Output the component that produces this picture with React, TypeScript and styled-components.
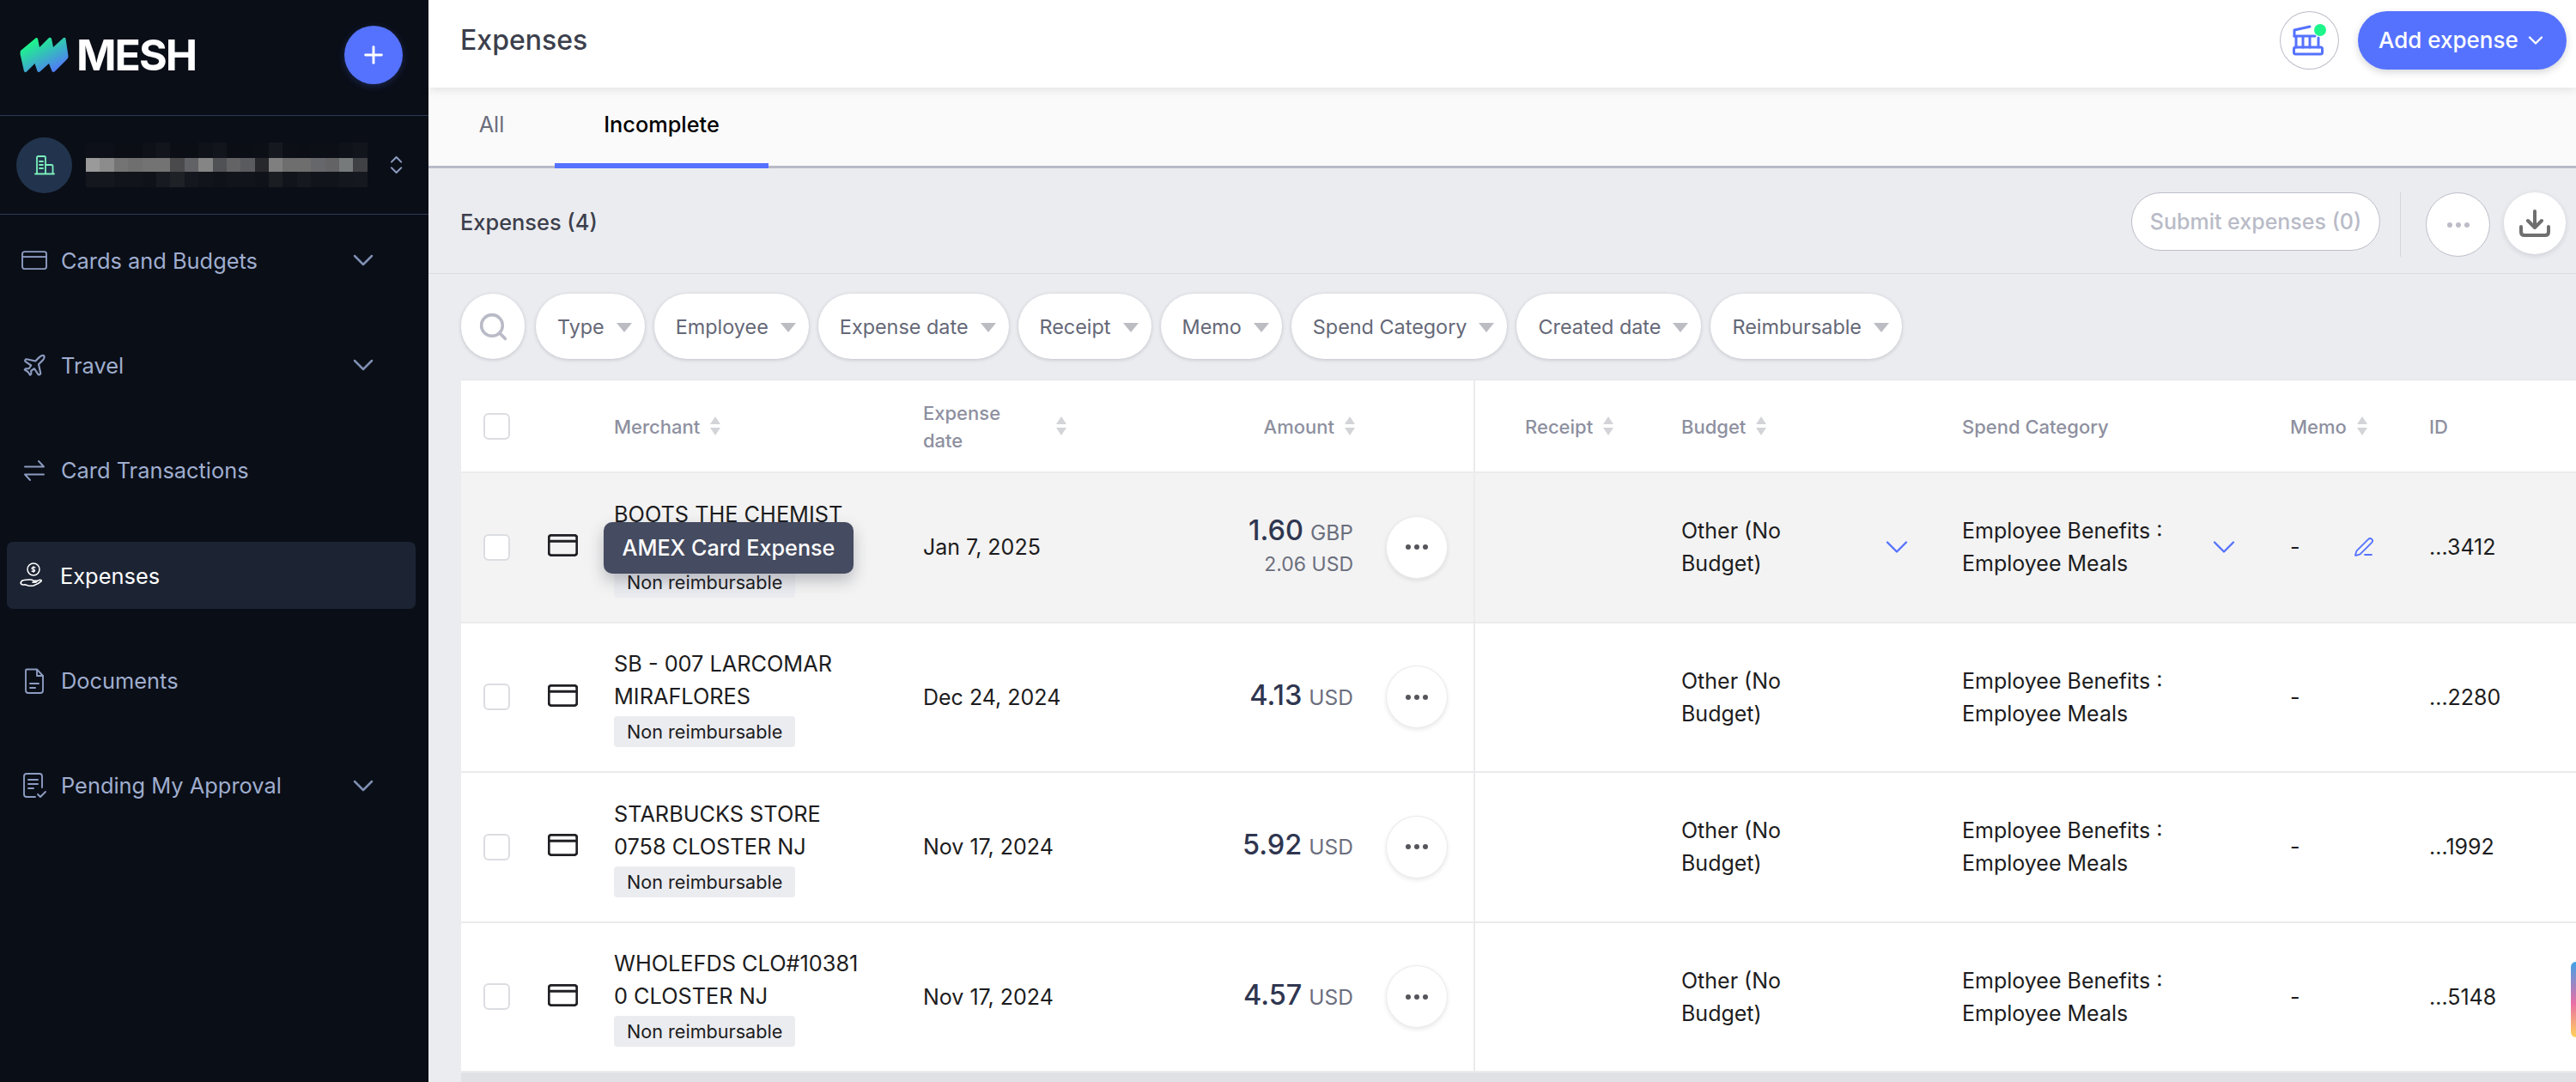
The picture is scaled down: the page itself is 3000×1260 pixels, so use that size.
import React from 'react';
import styled, { createGlobalStyle } from 'styled-components';
import { ChevronDown, ChevronsUpDown, PenLine, Plane, Plus, Search } from 'lucide-react';

const GlobalStyle = createGlobalStyle`
  html, body {
    margin: 0;
    padding: 0;
  }
  body {
    font-family: Inter, "Liberation Sans", sans-serif;
    background: #ebecf0;
  }
  * {
    box-sizing: border-box;
  }
`;

const Page = styled.div`
  display: flex;
  width: 3000px;
  height: 1260px;
  overflow: hidden;
  position: relative;
`;

/* sidebar */

const Sidebar = styled.aside`
  width: 499px;
  flex-shrink: 0;
  background: #0a0e17;
  display: flex;
  flex-direction: column;
`;

const BrandRow = styled.div`
  height: 135px;
  padding: 0 30px 7px 23px;
  display: flex;
  align-items: center;
  justify-content: space-between;
  border-bottom: 1px solid #2f3a58;
`;

const Brand = styled.div`
  display: flex;
  align-items: center;
  gap: 9px;
`;

const BrandName = styled.span`
  color: #fff;
  font-size: 50px;
  font-weight: 700;
  letter-spacing: -2px;
  line-height: 1;
`;

const RoundAdd = styled.button`
  width: 68px;
  height: 68px;
  border: 0;
  border-radius: 50%;
  background: #5572ff;
  color: #fff;
  display: flex;
  align-items: center;
  justify-content: center;
  padding: 0;
  box-shadow: 0 2px 8px rgba(85, 114, 255, 0.25);
`;

const AccountRow = styled.div`
  height: 115px;
  padding: 0 24px 0 19px;
  display: flex;
  align-items: center;
  border-bottom: 1px solid #2f3a58;
  color: #8c9cc0;
`;

const AccountBadge = styled.div`
  width: 65px;
  height: 65px;
  border-radius: 50%;
  background: #22344d;
  display: flex;
  align-items: center;
  justify-content: center;
  margin-right: 16px;
  flex-shrink: 0;
`;

const Pixelated = styled.div`
  display: grid;
  grid-template-columns: repeat(20, 16.4px);
  grid-template-rows: 18px 16px 18px;
  margin-right: 20px;
`;

const PixelBlock = styled.i<{ $tone: string }>`
  background: ${(p) => p.$tone};
`;

const NavList = styled.nav`
  display: flex;
  flex-direction: column;
  padding: 0 15px 0 8px;
  margin-top: 14px;
`;

const NavItem = styled.a<{ $active?: boolean }>`
  height: 78px;
  margin-bottom: 44.4px;
  padding: 0 41px 0 ${(p) => (p.$active ? 15 : 17)}px;
  border-radius: 7px;
  display: flex;
  align-items: center;
  gap: ${(p) => (p.$active ? 17 : 16)}px;
  color: ${(p) => (p.$active ? '#fff' : '#9fadce')};
  background: ${(p) => (p.$active ? '#1c2433' : 'transparent')};
  font-size: 25.4px;
`;

const NavIcon = styled.span`
  width: 30px;
  height: 30px;
  display: flex;
  align-items: center;
  justify-content: center;
  flex-shrink: 0;
`;

const NavLabel = styled.span`
  flex: 1;
`;

/* main column */

const Main = styled.main`
  flex: 1;
  min-width: 0;
  display: flex;
  flex-direction: column;
`;

const TopBar = styled.header`
  height: 102px;
  padding: 0 11px 8px 37px;
  background: #fff;
  display: flex;
  align-items: center;
  justify-content: space-between;
  box-shadow: 0 2px 10px rgba(40, 44, 60, 0.12);
  position: relative;
  z-index: 1;
`;

const PageTitle = styled.h1`
  margin: 0;
  color: #3c3f4c;
  font-size: 32px;
  font-weight: 500;
`;

const TopActions = styled.div`
  display: flex;
  align-items: center;
  gap: 22px;
`;

const BankButton = styled.button`
  width: 69px;
  height: 68px;
  border-radius: 50%;
  border: 1px solid #bcbdc8;
  background: #fff;
  padding: 0;
  display: flex;
  align-items: center;
  justify-content: center;
`;

const AddButton = styled.button`
  width: 243px;
  height: 68px;
  border: 0;
  border-radius: 34px;
  padding: 0 22px 0 24px;
  background: #5572ff;
  color: #fff;
  font: 500 26px Inter, sans-serif;
  white-space: nowrap;
  display: flex;
  align-items: center;
  justify-content: space-between;
  box-shadow: 0 3px 8px rgba(40, 44, 60, 0.2);
`;

const Tabs = styled.div`
  height: 94px;
  background: #fafafa;
  border-bottom: 3px solid #b9bbc7;
  display: flex;
`;

const Tab = styled.div<{ $active?: boolean; $width: number }>`
  width: ${(p) => p.$width}px;
  height: 94px;
  padding-bottom: ${(p) => (p.$active ? 2 : 8)}px;
  display: flex;
  align-items: center;
  justify-content: center;
  font-size: 25.3px;
  font-weight: ${(p) => (p.$active ? 500 : 400)};
  color: ${(p) => (p.$active ? '#000' : '#6b6e7d')};
  border-bottom: ${(p) => (p.$active ? '6px solid #5572ff' : '0')};
`;

const Toolbar = styled.div`
  height: 124px;
  padding: 2px 12px 0 37px;
  display: flex;
  align-items: center;
  justify-content: space-between;
  border-bottom: 1px solid #dcdde3;
`;

const ToolbarTitle = styled.div`
  color: #3c3f4c;
  font-size: 25.4px;
  font-weight: 500;
`;

const ToolbarActions = styled.div`
  display: flex;
  align-items: flex-start;
  height: 75px;
  margin-top: 7px;
`;

const SubmitButton = styled.button`
  width: 290px;
  height: 68px;
  border: 1px solid #bcbdc8;
  border-radius: 34px;
  background: #fff;
  color: #b9bbc7;
  font: 500 25px Inter, sans-serif;
  padding: 0;
`;

const ToolbarDivider = styled.div`
  width: 1px;
  height: 75px;
  background: #d5d6dc;
  margin: 0 29px 0 23px;
`;

const CircleButton = styled.button<{ $raised?: boolean; $size: number }>`
  width: ${(p) => p.$size}px;
  height: ${(p) => p.$size}px;
  border-radius: 50%;
  background: #fff;
  border: ${(p) => (p.$raised ? '0' : '1px solid #bcbdc8')};
  box-shadow: ${(p) => (p.$raised ? '0 2px 6px rgba(40, 44, 60, 0.14)' : 'none')};
  display: flex;
  align-items: center;
  justify-content: center;
  padding: 0;
  flex-shrink: 0;
`;

const DownloadSlot = styled.div`
  margin-left: 16px;
`;

const FilterBar = styled.div`
  height: 123px;
  padding: 23px 0 0 38px;
  display: flex;
  align-items: flex-start;
  gap: 11px;
`;

const SearchPill = styled.div`
  width: 74px;
  height: 76px;
  margin-right: 2px;
  border-radius: 38px;
  background: #fff;
  box-shadow: 0 1px 4px rgba(40, 44, 60, 0.22);
  color: #b9bbc7;
  display: flex;
  align-items: center;
  justify-content: center;
`;

const FilterPill = styled.div`
  height: 76px;
  padding: 0 15px 0 25px;
  border-radius: 38px;
  background: #fff;
  box-shadow: 0 1px 4px rgba(40, 44, 60, 0.22);
  color: #656877;
  font-size: 23.4px;
  display: flex;
  align-items: center;
  gap: 14px;
`;

const Caret = styled.span`
  width: 0;
  height: 0;
  border-left: 9px solid transparent;
  border-right: 9px solid transparent;
  border-top: 11px solid #bcbdc3;
  margin-top: 3px;
`;

/* table */

const COLUMNS = '101px 77px 360px 275px 366px 242px 327px 382px 162px 171px';

const Table = styled.section`
  margin-left: 38px;
  background: #fff;
  border-top: 1px solid #e4e5e9;
  border-bottom: 11px solid #e0e1e4;
  position: relative;
`;

const HeadRow = styled.div`
  height: 108px;
  display: grid;
  grid-template-columns: ${COLUMNS};
  align-items: stretch;
  border-bottom: 2px solid #ebebed;
`;

const HeadCell = styled.div<{ $right?: boolean; $split?: boolean }>`
  display: flex;
  align-items: center;
  gap: 12px;
  color: #8e90a0;
  font-size: 22px;
  font-weight: 500;
  line-height: 32px;
  justify-content: ${(p) => (p.$right ? 'flex-end' : 'flex-start')};
  padding-top: 2px;
  padding-right: ${(p) => (p.$right ? 138 : 0)}px;
  padding-left: ${(p) => (p.$split ? 58 : 0)}px;
  border-left: ${(p) => (p.$split ? '2px solid #ebebed' : '0')};
`;

const HeadWrap = styled.span`
  width: 130px;
  margin-right: 13px;
`;

const SortIcon = styled.span`
  display: inline-flex;
  flex-direction: column;
  gap: 4px;
  margin-top: -2px;

  &::before,
  &::after {
    content: '';
    width: 0;
    height: 0;
    border-left: 6px solid transparent;
    border-right: 6px solid transparent;
  }
  &::before {
    border-bottom: 9px solid #d3d4d8;
  }
  &::after {
    border-top: 9px solid #d3d4d8;
  }
`;

const CheckCell = styled.div`
  display: flex;
  align-items: center;
  padding-left: 26px;
`;

const CheckBox = styled.span`
  width: 31px;
  height: 31px;
  border: 2px solid #dcdde1;
  border-radius: 6px;
  background: #fff;
`;

const Row = styled.div<{ $hover?: boolean }>`
  height: 174.5px;
  display: grid;
  grid-template-columns: ${COLUMNS};
  align-items: stretch;
  background: ${(p) => (p.$hover ? '#f3f3f3' : '#fff')};
  border-bottom: 2px solid #ebebed;
  color: #1c1c20;
  font-size: 25px;

  &:last-child {
    border-bottom: 0;
  }
`;

const Cell = styled.div`
  display: flex;
  align-items: center;
`;

const CardCell = styled(Cell)`
  padding-bottom: 4px;
`;

const Merchant = styled.div`
  display: flex;
  flex-direction: column;
  justify-content: center;
  align-items: flex-start;
  padding-top: 1px;
`;

const MerchantLine = styled.span`
  font-size: 25.3px;
  line-height: 38px;
  white-space: nowrap;
`;

const Tag = styled.span`
  margin-top: 4px;
  height: 36px;
  padding: 0 15px;
  background: #ebecf0;
  border-radius: 4px;
  font-size: 21.6px;
  line-height: 36px;
  white-space: nowrap;
`;

const AmountCell = styled(Cell)`
  justify-content: flex-end;
  padding-right: 30px;
  gap: 38px;
`;

const AmountStack = styled.div`
  display: flex;
  flex-direction: column;
  align-items: flex-end;
  gap: 6px;
  margin-top: -5px;
`;

const AmountMain = styled.div`
  color: #2f3650;
  font-size: 32.5px;
  font-weight: 500;
  display: flex;
  align-items: baseline;
  gap: 8px;
`;

const Currency = styled.span`
  color: #6b6e7d;
  font-size: 24.5px;
  font-weight: 400;
`;

const AmountSecondary = styled.div`
  color: #6b6e7d;
  font-size: 23px;
`;

const RowMore = styled.button`
  width: 72px;
  height: 73px;
  border-radius: 50%;
  background: #fff;
  border: 1px solid #ebebed;
  box-shadow: 0 2px 5px rgba(40, 44, 60, 0.1);
  display: flex;
  align-items: center;
  justify-content: center;
  padding: 0;
  flex-shrink: 0;
`;

const SplitCell = styled(Cell)`
  border-left: 2px solid #ebebed;
`;

const PickCell = styled(Cell)<{ $text: number; $pad: number }>`
  justify-content: space-between;
  padding-right: ${(p) => p.$pad}px;
  color: #1c1c20;
  line-height: 38px;

  > span {
    width: ${(p) => p.$text}px;
  }
`;

const MemoCell = styled(Cell)`
  gap: 62px;
  min-height: 0;
`;

const Tooltip = styled.div`
  position: absolute;
  left: 166px;
  top: 165px;
  width: 291px;
  height: 60px;
  border-radius: 10px;
  background: #454b60;
  color: #fff;
  font-size: 25.2px;
  font-weight: 500;
  display: flex;
  align-items: center;
  justify-content: center;
  box-shadow: 0 8px 18px rgba(40, 44, 60, 0.28);
`;

const ColorTab = styled.div`
  position: absolute;
  right: -6px;
  top: 1120px;
  width: 12px;
  height: 88px;
  border-radius: 8px;
  background: linear-gradient(180deg, #3ea2e8 0%, #e96fa6 55%, #ffd25a 100%);
`;

/* drawings */

const LogoMark = () => (
  <svg width="57" height="42" viewBox="0 0 57 42">
    <defs>
      <linearGradient id="meshGrad" x1="0.15" y1="0.05" x2="0.85" y2="0.95">
        <stop offset="0.1" stopColor="#1df58a" />
        <stop offset="1" stopColor="#5572ff" />
      </linearGradient>
    </defs>
    <path
      d="M1 16 L19 1 Q20 0.5 21 2 L23 12 L34 1 Q36 0 37 2 L39 12 L51 1 Q53 0 53.5 2 L56.5 22 Q57 24 55 26 L41 40 Q39 42 37.5 40 L34 31 L24 40 Q22 42 20.5 40 L17.5 31 L8 40.5 Q6 42 5 40 L0.5 20 Q0.5 17 1 16 Z"
      fill="url(#meshGrad)"
    />
  </svg>
);

const BuildingIcon = () => (
  <svg width="24" height="24" viewBox="0 0 24 24" fill="none" stroke="#7cf0bd" strokeWidth="1.8" strokeLinecap="round">
    <path d="M1 22.500h22M3 22.500V3.500q0-1.500 1.500-1.500h7q1.500 0 1.500 1.500v19M13 12h7q1.500 0 1.500 1.500v9" />
    <path d="M6 8h4M6 12h4M6 16h4" />
  </svg>
);

const CardGlyph = ({ size, color, weight }: { size: number; color: string; weight: number }) => (
  <svg width={size} height={size * 0.74} viewBox="0 0 30 22" fill="none" stroke={color} strokeWidth={weight}>
    <rect x="1" y="1" width="28" height="20" rx="2.500" />
    <path d="M1 7h28" />
  </svg>
);

const NavStroke = ({ children, color }: { children: React.ReactNode; color: string }) => (
  <svg width="30" height="30" viewBox="0 0 30 30" fill="none" stroke={color} strokeWidth="1.900" strokeLinecap="round" strokeLinejoin="round">
    {children}
  </svg>
);

const SwapIcon = () => (
  <NavStroke color="#8c9cc0">
    <path d="M4 10.500h22M20 4l6 6.500M26 19.500H4M10 26l-6-6.500" />
  </NavStroke>
);

const HandCoinIcon = () => (
  <NavStroke color="#fff">
    <circle cx="16" cy="8" r="7" strokeWidth="1.500" />
    <path d="M16 4.500v7M18 6q-2-1.200-3.400 0t.4 2q3 .5 2.600 1.800t-3.600.3" strokeWidth="1.200" />
    <path d="M1 24q1-3.500 4-3.500l6-.5q3-.3 5 1.200h3q2 .3 0 1.800l-4 .2 8-2.800q3-.4 2 1.500-3 3-9 5-3 .8-6 0l-4-1.200q-4 1-5-1.700Z" strokeWidth="1.600" />
  </NavStroke>
);

const DocumentIcon = () => (
  <NavStroke color="#8c9cc0">
    <path d="M6 1.500h12l7 7.500v17q0 3-3 3H8q-3 0-3-3V3q0-1.500 1-1.500Z" />
    <path d="M18 2v7h7M10 18h10M10 23h6" />
  </NavStroke>
);

const ApprovalIcon = () => (
  <NavStroke color="#8c9cc0">
    <path d="M16 28H6q-3 0-3-3V4q0-3 3-3h15q3 0 3 3v13" />
    <path d="M8 8h11M8 13h11M8 18h6M19 25l3 3 6-6" />
  </NavStroke>
);

const BankGlyph = styled.svg`
  margin-right: 4px;
`;

const BankIcon = () => (
  <BankGlyph width="36" height="36" viewBox="0 0 36 36" fill="none" stroke="#5572ff" strokeWidth="3" strokeLinecap="round" strokeLinejoin="round">
    <path d="M2 13V6L20 2" />
    <path d="M2 13h24M4 13v13M12 13v13M20 13v13M30 15v11" />
    <rect x="1.500" y="26" width="33" height="8" rx="2" />
  </BankGlyph>
);

const NotifyDot = styled.span`
  position: absolute;
  top: 14px;
  right: 14px;
  width: 14px;
  height: 14px;
  border-radius: 50%;
  background: #1df58a;
`;

const BankSlot = styled.span`
  position: relative;
  display: flex;
  width: 100%;
  height: 100%;
  align-items: center;
  justify-content: center;
`;

const Dots = ({ color }: { color: string }) => (
  <svg width="26" height="6" viewBox="0 0 26 6" fill={color}>
    <circle cx="3" cy="3" r="3" />
    <circle cx="13" cy="3" r="3" />
    <circle cx="23" cy="3" r="3" />
  </svg>
);

const DownloadIcon = () => (
  <svg width="36" height="32" viewBox="0 0 36 32" fill="none" stroke="#6f6f6f" strokeWidth="4" strokeLinecap="round" strokeLinejoin="round">
    <path d="M18 2v18M10 13l8 8 8-8M2 20v6q0 4 4 4h24q4 0 4-4v-6" />
  </svg>
);

/* data */

const pixelRows = [
  ['#0d1018', '#0d1018', '#0b0e15', '#0b0e15', '#0e1118', '#12151c', '#0b0e15', '#0b0e15', '#0f1319', '#12151c', '#0b0e15', '#0b0e15', '#0c0f16', '#15181f', '#0c0f16', '#0b0e15', '#0c0f16', '#0c0f16', '#0f1219', '#12151c'],
  ['#9a9a9a', '#8c8c8c', '#747474', '#6f6f6f', '#737373', '#737373', '#4a4a4c', '#616266', '#858585', '#505154', '#636366', '#5a5b5e', '#26282b', '#7f7f7f', '#6e6e6e', '#6e6e6e', '#66676a', '#636366', '#777a7a', '#404144'],
  ['#14171e', '#14171e', '#11141a', '#11141a', '#0f1219', '#171a20', '#1e2226', '#14171e', '#11141a', '#0f1219', '#11141a', '#11141a', '#0f1219', '#1a1d21', '#11141a', '#15181f', '#11141a', '#11141a', '#14171e', '#15181f'],
];

const navItems = [
  { label: 'Cards and Budgets', icon: <CardGlyph size={30} color="#8c9cc0" weight={1.900} />, expand: true },
  { label: 'Travel', icon: <Plane size={31} color="#8c9cc0" strokeWidth={1.700} />, expand: true },
  { label: 'Card Transactions', icon: <SwapIcon /> },
  { label: 'Expenses', icon: <HandCoinIcon />, active: true },
  { label: 'Documents', icon: <DocumentIcon /> },
  { label: 'Pending My Approval', icon: <ApprovalIcon />, expand: true },
];

const filters = ['Type', 'Employee', 'Expense date', 'Receipt', 'Memo', 'Spend Category', 'Created date', 'Reimbursable'];

const expenses = [
  { id: '...3412', merchant: ['BOOTS THE CHEMIST', 'HOUNSLOW'], date: 'Jan 7, 2025', amount: '1.60', currency: 'GBP', converted: '2.06 USD', hover: true },
  { id: '...2280', merchant: ['SB - 007 LARCOMAR', 'MIRAFLORES'], date: 'Dec 24, 2024', amount: '4.13', currency: 'USD' },
  { id: '...1992', merchant: ['STARBUCKS STORE', '0758 CLOSTER NJ'], date: 'Nov 17, 2024', amount: '5.92', currency: 'USD' },
  { id: '...5148', merchant: ['WHOLEFDS CLO#10381', '0 CLOSTER NJ'], date: 'Nov 17, 2024', amount: '4.57', currency: 'USD' },
];

export default function App() {
  return (
    <Page>
      <GlobalStyle />
      <Sidebar>
        <BrandRow>
          <Brand>
            <LogoMark />
            <BrandName>MESH</BrandName>
          </Brand>
          <RoundAdd>
            <Plus size={32} strokeWidth={2.200} />
          </RoundAdd>
        </BrandRow>
        <AccountRow>
          <AccountBadge>
            <BuildingIcon />
          </AccountBadge>
          <Pixelated>
            {pixelRows.flat().map((tone, i) => (
              <PixelBlock key={i} $tone={tone} />
            ))}
          </Pixelated>
          <ChevronsUpDown size={28} strokeWidth={1.800} />
        </AccountRow>
        <NavList>
          {navItems.map((item) => (
            <NavItem key={item.label} $active={item.active}>
              <NavIcon>{item.icon}</NavIcon>
              <NavLabel>{item.label}</NavLabel>
              {item.expand && <ChevronDown size={40} color="#7f8fb3" strokeWidth={1.500} />}
            </NavItem>
          ))}
        </NavList>
      </Sidebar>

      <Main>
        <TopBar>
          <PageTitle>Expenses</PageTitle>
          <TopActions>
            <BankButton>
              <BankSlot>
                <BankIcon />
                <NotifyDot />
              </BankSlot>
            </BankButton>
            <AddButton>
              Add expense
              <ChevronDown size={28} strokeWidth={2} />
            </AddButton>
          </TopActions>
        </TopBar>

        <Tabs>
          <Tab $width={147}>All</Tab>
          <Tab $width={249} $active>
            Incomplete
          </Tab>
        </Tabs>

        <Toolbar>
          <ToolbarTitle>Expenses (4)</ToolbarTitle>
          <ToolbarActions>
            <SubmitButton>Submit expenses (0)</SubmitButton>
            <ToolbarDivider />
            <CircleButton $size={75}>
              <Dots color="#bcbdc8" />
            </CircleButton>
            <DownloadSlot>
              <CircleButton $size={72} $raised>
                <DownloadIcon />
              </CircleButton>
            </DownloadSlot>
          </ToolbarActions>
        </Toolbar>

        <FilterBar>
          <SearchPill>
            <Search size={37} strokeWidth={2.300} />
          </SearchPill>
          {filters.map((name) => (
            <FilterPill key={name}>
              {name}
              <Caret />
            </FilterPill>
          ))}
        </FilterBar>

        <Table>
          <HeadRow>
            <CheckCell>
              <CheckBox />
            </CheckCell>
            <HeadCell />
            <HeadCell>
              Merchant
              <SortIcon />
            </HeadCell>
            <HeadCell>
              <HeadWrap>Expense date</HeadWrap>
              <SortIcon />
            </HeadCell>
            <HeadCell $right>
              Amount
              <SortIcon />
            </HeadCell>
            <HeadCell $split>
              Receipt
              <SortIcon />
            </HeadCell>
            <HeadCell>
              Budget
              <SortIcon />
            </HeadCell>
            <HeadCell>Spend Category</HeadCell>
            <HeadCell>
              Memo
              <SortIcon />
            </HeadCell>
            <HeadCell>ID</HeadCell>
          </HeadRow>

          {expenses.map((row) => (
            <Row key={row.id} $hover={row.hover}>
              <CheckCell>
                <CheckBox />
              </CheckCell>
              <CardCell>
                <CardGlyph size={35} color="#1f1f24" weight={2.500} />
              </CardCell>
              <Cell>
                <Merchant>
                  {row.merchant.map((line) => (
                    <MerchantLine key={line}>{line}</MerchantLine>
                  ))}
                  <Tag>Non reimbursable</Tag>
                </Merchant>
              </Cell>
              <Cell>{row.date}</Cell>
              <AmountCell>
                <AmountStack>
                  <AmountMain>
                    {row.amount}
                    <Currency>{row.currency}</Currency>
                  </AmountMain>
                  {row.converted && <AmountSecondary>{row.converted}</AmountSecondary>}
                </AmountStack>
                <RowMore>
                  <Dots color="#55565c" />
                </RowMore>
              </AmountCell>
              <SplitCell />
              <PickCell $text={190} $pad={54}>
                <span>Other (No Budget)</span>
                {row.hover && <ChevronDown size={44} color="#5572ff" strokeWidth={1.300} />}
              </PickCell>
              <PickCell $text={260} $pad={55}>
                <span>Employee Benefits : Employee Meals</span>
                {row.hover && <ChevronDown size={44} color="#5572ff" strokeWidth={1.300} />}
              </PickCell>
              <MemoCell>
                -
                {row.hover && <PenLine size={24} color="#5572ff" strokeWidth={1.800} />}
              </MemoCell>
              <Cell>{row.id}</Cell>
            </Row>
          ))}
          <Tooltip>AMEX Card Expense</Tooltip>
        </Table>
      </Main>
      <ColorTab />
    </Page>
  );
}
